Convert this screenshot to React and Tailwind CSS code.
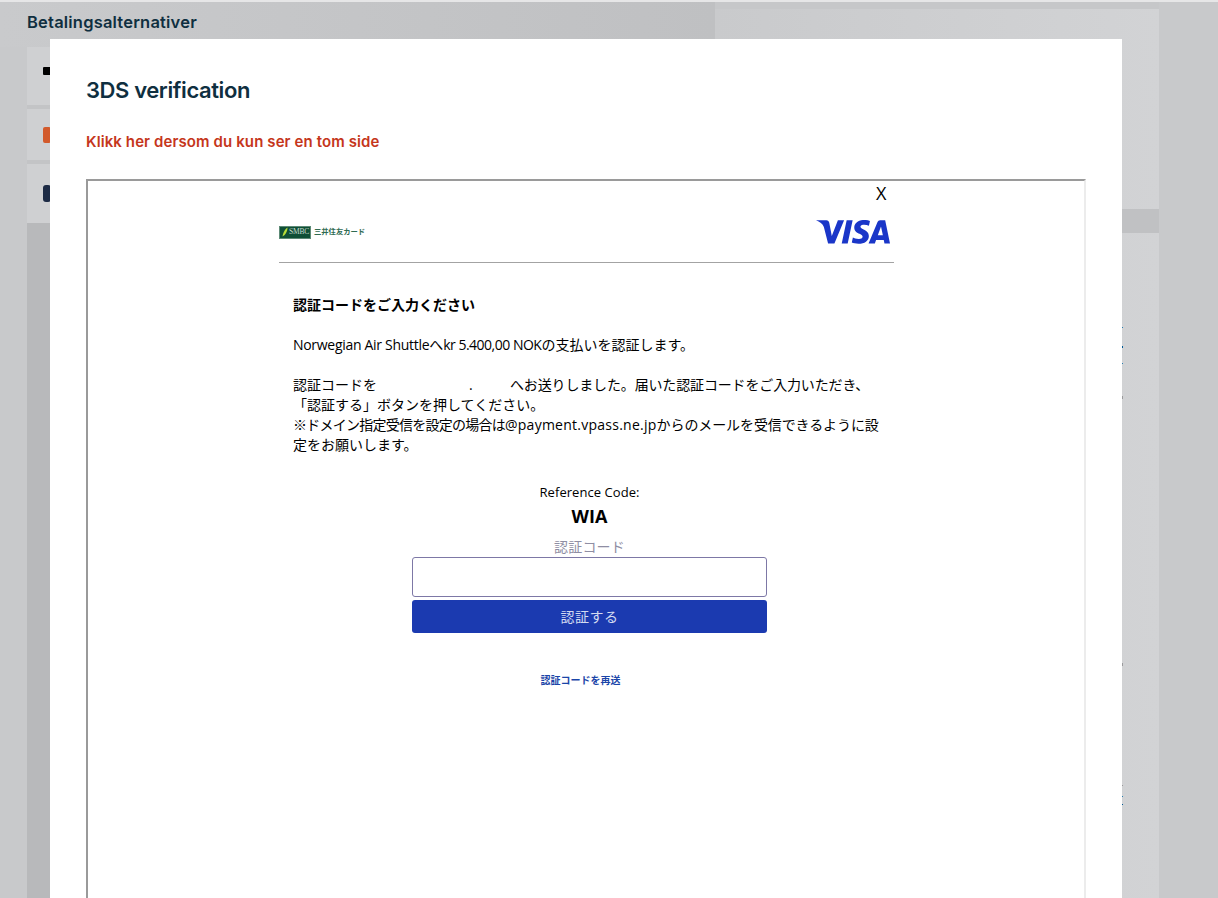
const jp = { fontFamily: '"Open Sans","Noto Sans CJK JP",sans-serif' };

function Visa() {
  return (
    <svg viewBox="0 8.262 24 7.55" className="h-[24px] w-[74px]" fill="#1a36c8">
      <path d="M0 8.262h3.4c.45 0 .8.3.9.76l.82 4.33L7.1 8.262h2.012L5.97 15.758H3.92L2.55 10.4C2.2 9.4 1.2 8.7 0 8.262z" />
      <path d="M17.145 13.311c.008-1.979-2.736-2.088-2.717-2.972.006-.269.262-.555.822-.628a3.66 3.66 0 011.913.336l.34-1.59a5.207 5.207 0 00-1.814-.333c-1.917 0-3.266 1.02-3.278 2.479-.012 1.079.963 1.68 1.698 2.04.756.367 1.01.603 1.006.931-.005.504-.602.725-1.16.734-.975.015-1.54-.263-1.992-.473l-.351 1.642c.453.208 1.289.39 2.156.398 2.037 0 3.37-1.006 3.377-2.564m5.061 2.447H24l-1.565-7.496h-1.656a.883.883 0 00-.826.55l-2.909 6.946h2.036l.405-1.12h2.488zm-2.163-2.656l1.04-2.867.602 2.867zm-8.16-4.84l-1.603 7.496H8.34l1.605-7.496z" />
    </svg>
  );
}

function Smbc() {
  return (
    <div className="flex items-center gap-[3px]">
      <div className="flex h-[13px] w-[32px] items-center gap-[1px] border border-[#5d8a76] bg-[#0f4f36] pl-[2px]">
        <svg viewBox="0 0 6 10" className="h-[10px] w-[6px] shrink-0">
          <path d="M0.5 9.5C1 6 3 2 5.5 0.5 5.5 4 3.5 8 0.5 9.5z" fill="#b7dc3a" />
        </svg>
        <span className="text-[7.5px] leading-none tracking-[-0.2px] text-[#c9dbd0]" style={{ fontFamily: '"Liberation Serif",serif' }}>SMBC</span>
      </div>
      <span className="text-[7.3px] font-bold leading-none whitespace-nowrap text-[#2f6b52]" style={{ fontFamily: '"Noto Sans CJK JP",sans-serif' }}>三井住友カード</span>
    </div>
  );
}

function Card({ h, icon, extra = '' }) {
  return (
    <div className={`${h} ${extra} flex items-center bg-[#cfd0d2] pl-[16px]`}>{icon}</div>
  );
}

function Dot({ y, c, h = 'h-[1px]' }) {
  return <div className={`absolute left-0 w-[1px] ${h} ${y} ${c}`} />;
}

export default function App() {
  return (
    <div className="relative h-[898px] overflow-hidden bg-[#c8c9cb]">
      <div className="h-[2px] bg-[#e6e6e7]" />
      <div className="flex pl-[27px]">
        <div className="w-[688px] shrink-0">
          <div className="-ml-[27px] flex h-[45px] items-start bg-gradient-to-r from-[#c9cacc] to-[#bfc0c2] pl-[27px] pt-[10px]">
            <h2 className="text-[16.5px] leading-[21px] font-semibold tracking-[0.2px] text-[#0f2f40]" style={{ fontFamily: 'Inter,sans-serif' }}>Betalingsalternativer</h2>
          </div>
          <div className="h-[851px] bg-[#b8b9bb]">
            <div className="flex flex-col gap-[4px] bg-[#c3c4c6]">
              <Card h="h-[58px]" extra="pb-[10px]" icon={<div className="h-[8px] w-[8px] rounded-[1px] bg-black" />} />
              <Card h="h-[51px]" icon={<div className="h-[16px] w-[8px] rounded-[2px] bg-[#d25a2c]" />} />
              <Card h="h-[59px]" icon={<div className="h-[17px] w-[8px] rounded-[3px] bg-[#1d2b45]" />} />
            </div>
          </div>
        </div>
        <div className="w-[444px] shrink-0 bg-[#c6c7c9] pt-[7px]">
          <div className="h-[200px] bg-gradient-to-r from-[#c9cacc] to-[#d2d3d5]" />
          <div className="h-[24px] bg-[#c0c1c3]" />
          <div className="h-[680px] bg-gradient-to-r from-[#c9cacc] to-[#d2d3d5]" />
        </div>
      </div>

      <div className="absolute top-0 left-[1122px] h-[898px] w-[1px]">
        <Dot y="top-[327px]" c="bg-[#2a7fb0]" />
        <Dot y="top-[346px]" c="bg-[#005a96]" h="h-[2px]" />
        <Dot y="top-[363px]" c="bg-[#2a7fb0]" />
        <Dot y="top-[396px]" c="bg-[#9a9a9c]" h="h-[3px]" />
        <Dot y="top-[663px]" c="bg-[#9a9a9c]" h="h-[3px]" />
        <Dot y="top-[785px]" c="bg-[#9a9a9c]" />
        <Dot y="top-[796px]" c="bg-[#2a7fb0]" />
        <Dot y="top-[804px]" c="bg-[#005a96]" />
      </div>

      <div className="absolute top-[39px] left-[50px] h-[859px] w-[1072px] overflow-hidden bg-white pt-[36px] pl-[36px]">
        <h1 className="text-[22px] leading-[30px] font-semibold tracking-[-0.4px] text-[#0f2f40]" style={{ fontFamily: 'Inter,sans-serif' }}>3DS verification</h1>
        <a className="mt-[27px] block text-[15px] leading-[20px] font-semibold tracking-[0.1px] text-[#c5361b]" style={{ fontFamily: 'Inter,sans-serif' }}>Klikk her dersom du kun ser en tom side</a>
        <div className="mt-[27px] h-[760px] w-[1000px] border-t-2 border-r-2 border-l-2 border-t-[#9a9a9a] border-r-[#ececec] border-l-[#9a9a9a] bg-white text-[14px] text-black" style={jp}>
          <div className="pl-[788px] text-[18px] leading-[24px]" style={{ fontFamily: '"Open Sans",sans-serif' }}>X</div>
          <div className="ml-[191px] w-[615px]">
            <div className="flex h-[58px] items-center justify-between border-b border-[#a3a3a3] pr-[4px] pb-[3px]">
              <Smbc />
              <Visa />
            </div>
            <div className="px-[14px]">
              <p className="mt-[32px] text-[14px] leading-[20px] font-bold">認証コードをご入力ください</p>
              <p className="mt-[20px] leading-[20px]">
                <span className="tracking-[-0.3px]">Norwegian Air Shuttle</span>へ<span className="tracking-[-0.5px]">kr 5.400,00 NOK</span>の支払いを認証します。
              </p>
              <p className="mt-[20px] w-[590px] leading-[20px]">
                認証コードを<span className="inline-block w-[133px] pl-[92px]">.</span><span className="tracking-[-0.15px]">へお送りしました。届いた認証コードをご入力いただき、</span><br />
                「認証する」ボタンを押してください。<br />
                <span className="tracking-[-0.75px]">※ドメイン指定受信を設定の場合は</span><span className="tracking-[0.25px]">@payment.vpass.ne.jp</span><span className="tracking-[-0.1px]">からのメールを受信できるように設</span><br />
                定をお願いします。
              </p>
            </div>
            <div className="ml-[133px] w-[355px] text-center">
              <p className="mt-[27px] text-[13px] leading-[20px] tracking-[0.05px]">Reference Code:</p>
              <p className="mt-[2px] text-[18px] leading-[24px] font-bold">WIA</p>
              <p className="mt-[9px] text-[14px] leading-[20px] tracking-[0.2px] text-[#8f8ea3]">認証コード</p>
              <div className="h-[40px] rounded-[3px] border border-[#7d78a6] bg-white" />
              <button className="mt-[3px] block h-[33px] w-full rounded-[3px] bg-[#1b3ab0] text-[14px] tracking-[0.5px] text-[#d3daf0]">認証する</button>
              <a className="mt-[37px] block pr-[18px] text-[10px] leading-[20px] font-bold text-[#1a45a8]">認証コードを再送</a>
            </div>
          </div>
        </div>
      </div>
    </div>
  );
}
